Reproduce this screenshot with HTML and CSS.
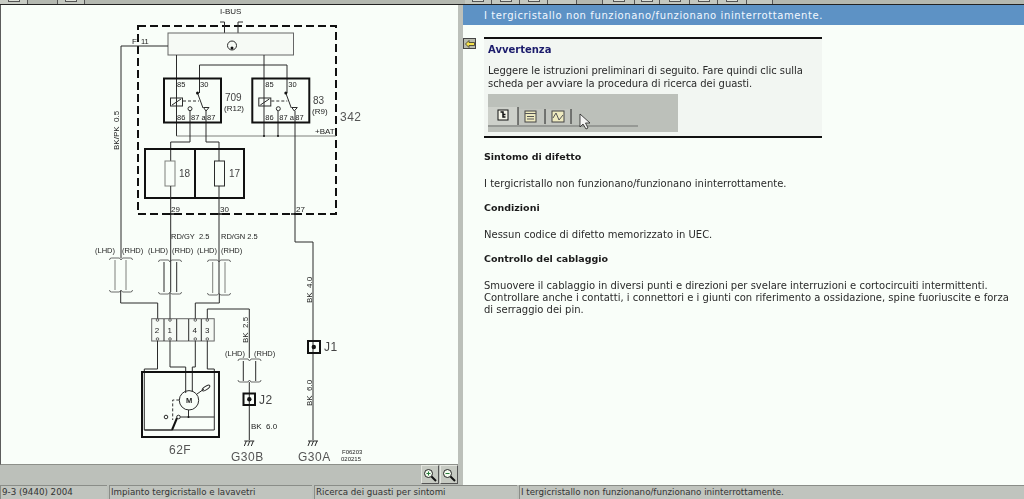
FILE: index.html
```html
<!DOCTYPE html>
<html lang="it">
<head>
<meta charset="utf-8">
<title>I tergicristallo non funzionano</title>
<link rel="stylesheet" href="styles.css">
</head>
<body>
<nav class="tabs">
  <span class="tab t1"><i></i></span><span class="tab t2 on"></span><span class="tab t3"><i></i></span>
  <span class="tab fill"></span>
  <span class="tab r t27"><i></i></span><span class="tab r t28"><i></i></span><span class="tab r t28"><i></i></span><span class="tab r t29"></span>
  <span class="tab r t26 on"></span><span class="tab r t32"><i></i></span><span class="tab r t25"><i></i></span><span class="tab r t30"><i></i></span><span class="tab r t28"><i></i></span><span class="tab r t29"><i></i></span><span class="tab r t26"></span>
  <span class="tab end"></span>
</nav>
<main class="main">
  <section class="left">
    <div class="canvas">
      <svg class="diagram" width="457" height="459" viewBox="1 5 457 459" xmlns="http://www.w3.org/2000/svg">
        <defs>
          <g id="brace">
            <path class="thin" d="M0 2 Q0 0 2 0 H10 L11.500 2 L13 0 H21 Q23 0 23 2"/>
          </g>
          <g id="brace-b">
            <path class="thin" d="M0 1 Q0 3 2 3 H10 L11.500 1 L13 3 H21 Q23 3 23 1"/>
          </g>
          <g id="ground">
            <path class="wire" d="M-5 0 H5 M-5 5 L-3 0 M-1.500 5 L.5 0 M2 5 L4 0"/>
          </g>
          <g id="relay">
            <rect class="heavy" x="164" y="78.500" width="57" height="44"/>
            <rect class="wire" x="170.500" y="98" width="12" height="8"/>
            <path class="wire" d="M172 105 L181 99"/>
            <path class="dash" d="M183 101 H199"/>
            <path class="wire" d="M197.500 93 L203 108"/>
            <circle class="dot" cx="197.500" cy="93" r="1.500"/>
            <circle class="wire" cx="190" cy="108.700" r="2"/>
            <path class="wire" d="M203.500 107.500 H209 L206 111 Z"/>
            <text class="t7" x="177" y="87">85</text>
            <text class="t7" x="200" y="87">30</text>
            <text class="t7" x="177" y="120">86</text>
            <text class="t7" x="191" y="120">87 a</text>
            <text class="t7" x="207" y="120">87</text>
          </g>
        </defs>

        <path class="heavy dashed" d="M138 26 H336 V214 H138 Z"/>
        <text class="t8" x="220" y="14">I-BUS</text>
        <path class="wire" d="M220 22 H224.500 V33 M243 22 H238 V33"/>
        <rect class="soft" x="168" y="33" width="125.500" height="22"/>
        <circle class="wire" cx="232" cy="45.500" r="4.500"/>
        <circle class="dot" cx="232" cy="48" r="1.500"/>

        <path class="wire" d="M168 46 H121 V258"/>
        <text class="t8" x="132" y="44">F</text>
        <text class="t7" x="141" y="44">11</text>
        <text class="t8 vert" transform="translate(119 150) rotate(-90)">BK/PK&#160;&#160;0.5</text>

        <path class="wire" d="M176.500 55 V136 M264 55 V136 M199.500 93 V65 H287 V93"/>
        <path class="grey" d="M176.500 136 H336"/>
        <path class="wire" d="M190 111 V142 H170.700 V161 M206 111 V142 H219 V161 M278 111 V136 M295 111 V242 H313 V440"/>
        <circle class="dot" cx="264" cy="136" r="1"/>
        <circle class="dot" cx="278" cy="136" r="1"/>

        <use href="#relay"/>
        <use href="#relay" x="88.300"/>
        <text class="t10" x="225" y="101">709</text>
        <text class="t8" x="224" y="111">(R12)</text>
        <text class="t10" x="313" y="104">83</text>
        <text class="t8" x="312" y="114">(R9)</text>
        <text class="t12" x="340" y="121">342</text>
        <text class="t8" x="315" y="134">+BAT</text>

        <rect class="heavy" x="145" y="149" width="99" height="49"/>
        <path class="heavy" d="M195 149 V198"/>
        <rect class="grey" x="165" y="161" width="10" height="25"/>
        <rect class="wire" x="214.500" y="161" width="10" height="25"/>
        <text class="t10" x="179" y="177">18</text>
        <text class="t10" x="229" y="177">17</text>
        <path class="wire" d="M170.700 186 V292 M219 186 V293"/>
        <text class="t8" x="171" y="212">29</text>
        <text class="t8" x="220" y="212">30</text>
        <text class="t8" x="296" y="212">27</text>
        <path class="heavy mark" d="M167 214 H174 M216 214 H223 M291 214 H298"/>

        <text class="t7" x="171" y="239">RD/GY&#160;&#160;2.5</text>
        <text class="t7" x="221" y="239">RD/GN&#160;2.5</text>
        <text class="t7" x="95" y="253">(LHD)</text><text class="t7" x="122" y="253">(RHD)</text>
        <text class="t7" x="148" y="253">(LHD)</text><text class="t7" x="172" y="253">(RHD)</text>
        <text class="t7" x="197" y="253">(LHD)</text><text class="t7" x="221" y="253">(RHD)</text>

        <use href="#brace" x="109.500" y="258"/><use href="#brace-b" x="109.500" y="289"/>
        <use href="#brace" x="158.500" y="260"/><use href="#brace-b" x="158.500" y="291"/>
        <use href="#brace" x="207.500" y="260"/><use href="#brace-b" x="207.500" y="292"/>
        <path class="grey" d="M115 260 V290 M126 260 V290"/>
        <path class="wire" d="M164 262 V292 M176.700 262 V292"/>
        <path class="grey" d="M212.700 262 V293 M225 262 V293"/>
        <path class="wire" d="M120.700 291 V303 H157.700 V320 M170 293 V320 M219.300 294 V303 H195.300 V320 M207.300 320 V309 H249.300 V358"/>

        <rect class="soft" x="151.700" y="318.700" width="62.500" height="22.300"/>
        <path class="wire" d="M164 319 V341 M176.700 319 V341 M188.700 319 V341 M201.300 319 V341"/>
        <text class="t8" x="154.700" y="333">2</text><text class="t8" x="167.500" y="333">1</text>
        <text class="t8" x="192.500" y="333">4</text><text class="t8" x="205" y="333">3</text>
        <path class="wire" d="M157.500 341 V369 H144.300 V430 H214.300 V369 H207.300 V341 M170 341 V367 H185.700 V393 M195.300 341 V367 H192.300 V392"/>
        <circle class="pin" cx="157.500" cy="320" r="1.300"/><circle class="pin" cx="170" cy="320" r="1.300"/>
        <circle class="pin" cx="195.300" cy="320" r="1.300"/><circle class="pin" cx="207.300" cy="320" r="1.300"/>
        <circle class="pin" cx="157.500" cy="339" r="1.300"/><circle class="pin" cx="170" cy="339" r="1.300"/>
        <circle class="pin" cx="195.300" cy="339" r="1.300"/><circle class="pin" cx="207.300" cy="339" r="1.300"/>

        <rect class="heavy" x="142" y="372" width="77" height="65"/>
        <circle class="wire" cx="189" cy="400.300" r="9.700"/>
        <text class="t7 mid" x="189" y="403">M</text>
        <path class="wire" d="M197 394 L204 389"/>
        <ellipse class="wire" cx="206" cy="388" rx="4.500" ry="1.700" transform="rotate(-35 206 388)"/>
        <path class="wire" d="M188.500 410 V417 M180.500 417 H214.300"/>
        <circle class="dot" cx="188.500" cy="417" r="1"/>
        <path class="dash" d="M179.300 400 H172.700 V420"/>
        <path class="heavy" d="M172 430 L177 418"/>
        <path class="wire" d="M144.300 430 H172"/>
        <circle class="wire" cx="166" cy="417" r="1.800"/>
        <circle class="wire" cx="178.500" cy="417" r="1.800"/>
        <text class="t12" x="169" y="454">62F</text>

        <text class="t7" x="225" y="356">(LHD)</text><text class="t7" x="254" y="356">(RHD)</text>
        <text class="t8 vert" transform="translate(248 343) rotate(-90)">BK&#160;&#160;2.5</text>
        <use href="#brace" x="238" y="359"/><use href="#brace-b" x="238" y="379"/>
        <path class="wire" d="M243.300 361 V381 M255.700 361 V381 M249.300 382 V440"/>
        <rect class="heavy" x="243.500" y="393.500" width="11.500" height="11.500"/>
        <circle class="dot" cx="249.300" cy="399.300" r="2.200"/>
        <text class="t12 pale" x="259" y="404">J2</text>
        <text class="t8" x="251" y="429">BK&#160;&#160;6.0</text>
        <use href="#ground" x="249.300" y="441"/>
        <text class="t12" x="231" y="461">G30B</text>

        <text class="t8 vert" transform="translate(312 303) rotate(-90)">BK&#160;&#160;4.0</text>
        <rect class="heavy" x="308" y="341" width="12" height="12"/>
        <circle class="dot" cx="313.800" cy="347" r="2.200"/>
        <text class="t12 pale" x="324" y="351">J1</text>
        <text class="t8 vert" transform="translate(312 406) rotate(-90)">BK&#160;&#160;6.0</text>
        <use href="#ground" x="313" y="441"/>
        <text class="t12" x="298" y="461">G30A</text>
        <text class="t6" x="342" y="454">F06203</text>
        <text class="t6" x="341" y="461">020215</text>
      </svg>
    </div>
    <div class="zoombar">
      <button class="zoom" aria-label="Ingrandisci">
        <svg width="14" height="14" viewBox="0 0 14 14"><circle class="lens" cx="5.500" cy="5.500" r="4"/><path class="lens-h" d="M8.500 8.500 L13 13"/><path class="lens-m" d="M3.500 5.500 H7.500 M5.500 3.500 V7.500"/></svg>
      </button>
      <button class="zoom" aria-label="Riduci">
        <svg width="14" height="14" viewBox="0 0 14 14"><circle class="lens" cx="5.500" cy="5.500" r="4"/><path class="lens-h" d="M8.500 8.500 L13 13"/><path class="lens-m" d="M3.500 5.500 H7.500"/></svg>
      </button>
    </div>
  </section>

  <section class="right">
    <h1 class="bar">I tergicristallo non funzionano/funzionano ininterrottamente.</h1>
    <button class="back" aria-label="Indietro">
      <svg width="10" height="8" viewBox="0 0 10 8"><path class="arrow" d="M.5 4 L4 .5 V2.500 H9.500 V5.500 H4 V7.500 Z"/></svg>
    </button>
    <div class="content">
      <aside class="notice">
        <h2 class="notice-title">Avvertenza</h2>
        <p class="notice-text">Leggere le istruzioni preliminari di seguito. Fare quindi clic sulla scheda per avviare la procedura di ricerca dei guasti.</p>
        <svg class="shot" width="190" height="38" viewBox="0 0 190 38">
          <rect class="shot-bg" width="190" height="38"/>
          <path class="shot-tab" d="M0 31 V13 H30 V31 Z"/>
          <path class="shot-tab2" d="M31 31 V15 H57 V31 Z M58 31 V15 H83 V31 Z"/>
          <path class="shot-line" d="M30 13 V31 M57 15 V30 M83 15 V30"/>
          <path class="shot-base" d="M0 32 H150"/>
          <rect class="ic-a" x="10" y="16" width="10" height="10"/>
          <path class="ic-b" d="M12.500 18 H15 V23 H17.500 M15 20.500 H17.500"/>
          <rect class="ic-c" x="37" y="17" width="11" height="11"/>
          <path class="ic-d" d="M37 19.500 H48 M39 22.500 H46 M39 25 H46"/>
          <rect class="ic-c" x="64" y="17" width="12" height="11"/>
          <path class="ic-e" d="M65 24 L68 19 L71 26 L75 21"/>
          <path class="cursor" d="M92 20 V33 L95 30 L98 35 L100 34 L97.500 29 L102 29 Z"/>
        </svg>
      </aside>
      <h3 class="head first">Sintomo di difetto</h3>
      <p class="para">I tergicristallo non funzionano/funzionano ininterrottamente.</p>
      <h3 class="head">Condizioni</h3>
      <p class="para">Nessun codice di difetto memorizzato in UEC.</p>
      <h3 class="head">Controllo del cablaggio</h3>
      <p class="para">Smuovere il cablaggio in diversi punti e direzioni per svelare interruzioni e cortocircuiti intermittenti. Controllare anche i contatti, i connettori e i giunti con riferimento a ossidazione, spine fuoriuscite e forza di serraggio dei pin.</p>
    </div>
  </section>
</main>
<footer class="status">
  <span class="cell c1">9-3 (9440) 2004</span>
  <span class="cell c2">Impianto tergicristallo e lavavetri</span>
  <span class="cell c3">Ricerca dei guasti per sintomi</span>
  <span class="cell c4">I tergicristallo non funzionano/funzionano ininterrottamente.</span>
</footer>
</body>
</html>
```
FILE: styles.css
```css
* { box-sizing: border-box; }
html, body { margin: 0; height: 100%; overflow: hidden; }
body {
  width: 1024px;
  height: 499px;
  display: flex;
  flex-direction: column;
  background: #bcc0ba;
  font-family: "DejaVu Sans", Verdana, sans-serif;
  font-size: 10px;
  color: #2a2a2a;
}

/* top tab strip, almost entirely cut off */
.tabs {
  flex: 0 0 5px;
  display: flex;
  background: #bcc0ba;
  border-bottom: 1px solid #222;
}
.tab {
  display: flex;
  justify-content: center;
  border-right: 1px solid #555;
  background: #c4c8c0;
}
.tab i {
  display: block;
  width: 12px;
  height: 2px;
  border: 1px solid #555;
  border-top: 0;
  background: #dde0d8;
}
.tab.on { background: #b4b8b0; }
.t1 { width: 28px; background: #c8ccc4; }
.t2 { width: 30px; }
.t3 { width: 27px; }
.fill { width: 380px; border-right: 0; background: #b4b8b0; }
.t27 { width: 27px; }
.t28 { width: 28px; }
.t29 { width: 29px; }
.t26 { width: 26px; }
.t32 { width: 32px; }
.t25 { width: 25px; }
.t30 { width: 30px; }
.end { flex: 1; border-right: 0; background: #b4b8b0; }

.main { flex: 0 0 479px; display: flex; }

/* left column: wiring diagram */
.left {
  flex: 0 0 458px;
  display: flex;
  flex-direction: column;
}
.canvas {
  height: 460px;
  background: #f9fef9;
  border-left: 1px solid #5c5c5c;
  border-bottom: 1px solid #8d908a;
}
.diagram { display: block; filter: blur(.35px); }
.diagram text { font-family: "Liberation Sans", Arial, sans-serif; fill: #222; }
.wire, .grey, .soft, .heavy, .dash, .thin, .pin { fill: none; }
.wire { stroke: #2b2b2b; stroke-width: 1; }
.grey { stroke: #7e807c; stroke-width: 1; }
.thin { stroke: #444; stroke-width: .8; }
.soft { stroke: #666; stroke-width: 1; fill: #f6faf5; }
.heavy { stroke: #111; stroke-width: 2; }
.dashed { stroke-dasharray: 8 4; }
.mark { stroke-width: 1.500; }
.dash { stroke: #333; stroke-width: 1; stroke-dasharray: 3 2; }
.dot { fill: #111; }
.pin { stroke: #444; stroke-width: .8; }
.t6 { font-size: 6px; }
.t7 { font-size: 7.500px; }
.t8 { font-size: 8px; }
.t10 { font-size: 10px; fill: #444 !important; }
.t12 { font-size: 12px; fill: #555 !important; letter-spacing: .5px; }
.pale { fill: #444 !important; }
.mid { text-anchor: middle; font-weight: bold; }

.zoombar {
  flex: 1;
  display: flex;
  justify-content: flex-end;
  gap: 1px;
  padding-bottom: 1px;
  filter: blur(.35px);
}
.zoom {
  width: 18px;
  height: 19px;
  padding: 0;
  display: flex;
  align-items: center;
  justify-content: center;
  background: #c6cac2;
  border: 1px solid;
  border-color: #e4e6e0 #555 #555 #e4e6e0;
}
.lens { fill: #f4fbf0; stroke: #222; stroke-width: 1; }
.lens-h { fill: none; stroke: #111; stroke-width: 2; }
.lens-m { fill: none; stroke: #2c7a3c; stroke-width: 1; }

/* right column: document */
.right {
  position: relative;
  flex: 1;
  margin-left: 5px;
  display: flex;
  flex-direction: column;
  background: #f9fef9;
}
.bar {
  margin: 0;
  flex: 0 0 20px;
  min-height: 0;
  padding-left: 21px;
  background: #5d92c5;
  color: #f2f8ff;
  font-size: 10px;
  font-weight: normal;
  letter-spacing: .6px;
  line-height: 21px;
}
.back {
  position: absolute;
  left: 0;
  top: 33px;
  width: 13px;
  height: 11px;
  padding: 0;
  display: flex;
  align-items: center;
  justify-content: center;
  background: #b9bcae;
  border: 1px solid #444;
}
.arrow { fill: #f5e24a; stroke: #333; stroke-width: .8; }

.content { padding: 12px 0 0 21px; width: 561px; filter: blur(.3px); }
.notice {
  width: 338px;
  height: 101px;
  padding: 0 4px;
  background: #f2f6f2;
  border-top: 2px solid #111;
  border-bottom: 2px solid #111;
}
.notice-title {
  margin: 5px 0 8px;
  font-size: 10px;
  line-height: 12px;
  color: #1c1c6c;
}
.notice-text { margin: 0 0 4px; line-height: 13px; letter-spacing: -.05px; }
.shot { display: block; }
.shot-bg { fill: #bcc0ba; }
.shot-tab { fill: #cdd0ca; }
.shot-tab2 { fill: #c2c5bf; }
.shot-line { fill: none; stroke: #222; stroke-width: 1; }
.shot-base { fill: none; stroke: #8a8c88; stroke-width: 1.500; }
.ic-a { fill: #f4f4e8; stroke: #111; }
.ic-b { fill: none; stroke: #111; stroke-width: 1.500; }
.ic-c { fill: #eeeac0; stroke: #444; }
.ic-d { fill: none; stroke: #555; stroke-width: 1; }
.ic-e { fill: none; stroke: #555; stroke-width: 1; }
.cursor { fill: #f4f4f4; stroke: #222; stroke-width: .8; }

.head {
  margin: 0;
  font-size: 9.500px;
  line-height: 12px;
  font-weight: bold;
  color: #1a1a1a;
}
.head.first { margin-top: 13px; }
.para {
  margin: 15px 0 12px;
  width: 532px;
  line-height: 12px;
}

/* bottom status bar */
.status {
  flex: 0 0 15px;
  display: flex;
  gap: 2px;
  padding-bottom: 1px;
  font-size: 8.700px;
  letter-spacing: 0;
}
.cell {
  padding-left: 1px;
  line-height: 13px;
  white-space: nowrap;
  overflow: hidden;
  background: #c0c4be;
  border-top: 1px solid #8a8d88;
  border-left: 1px solid #8a8d88;
  color: #333;
}
.c1 { width: 107px; }
.c2 { width: 203px; }
.c3 { width: 203px; }
.c4 { flex: 1; }
```
